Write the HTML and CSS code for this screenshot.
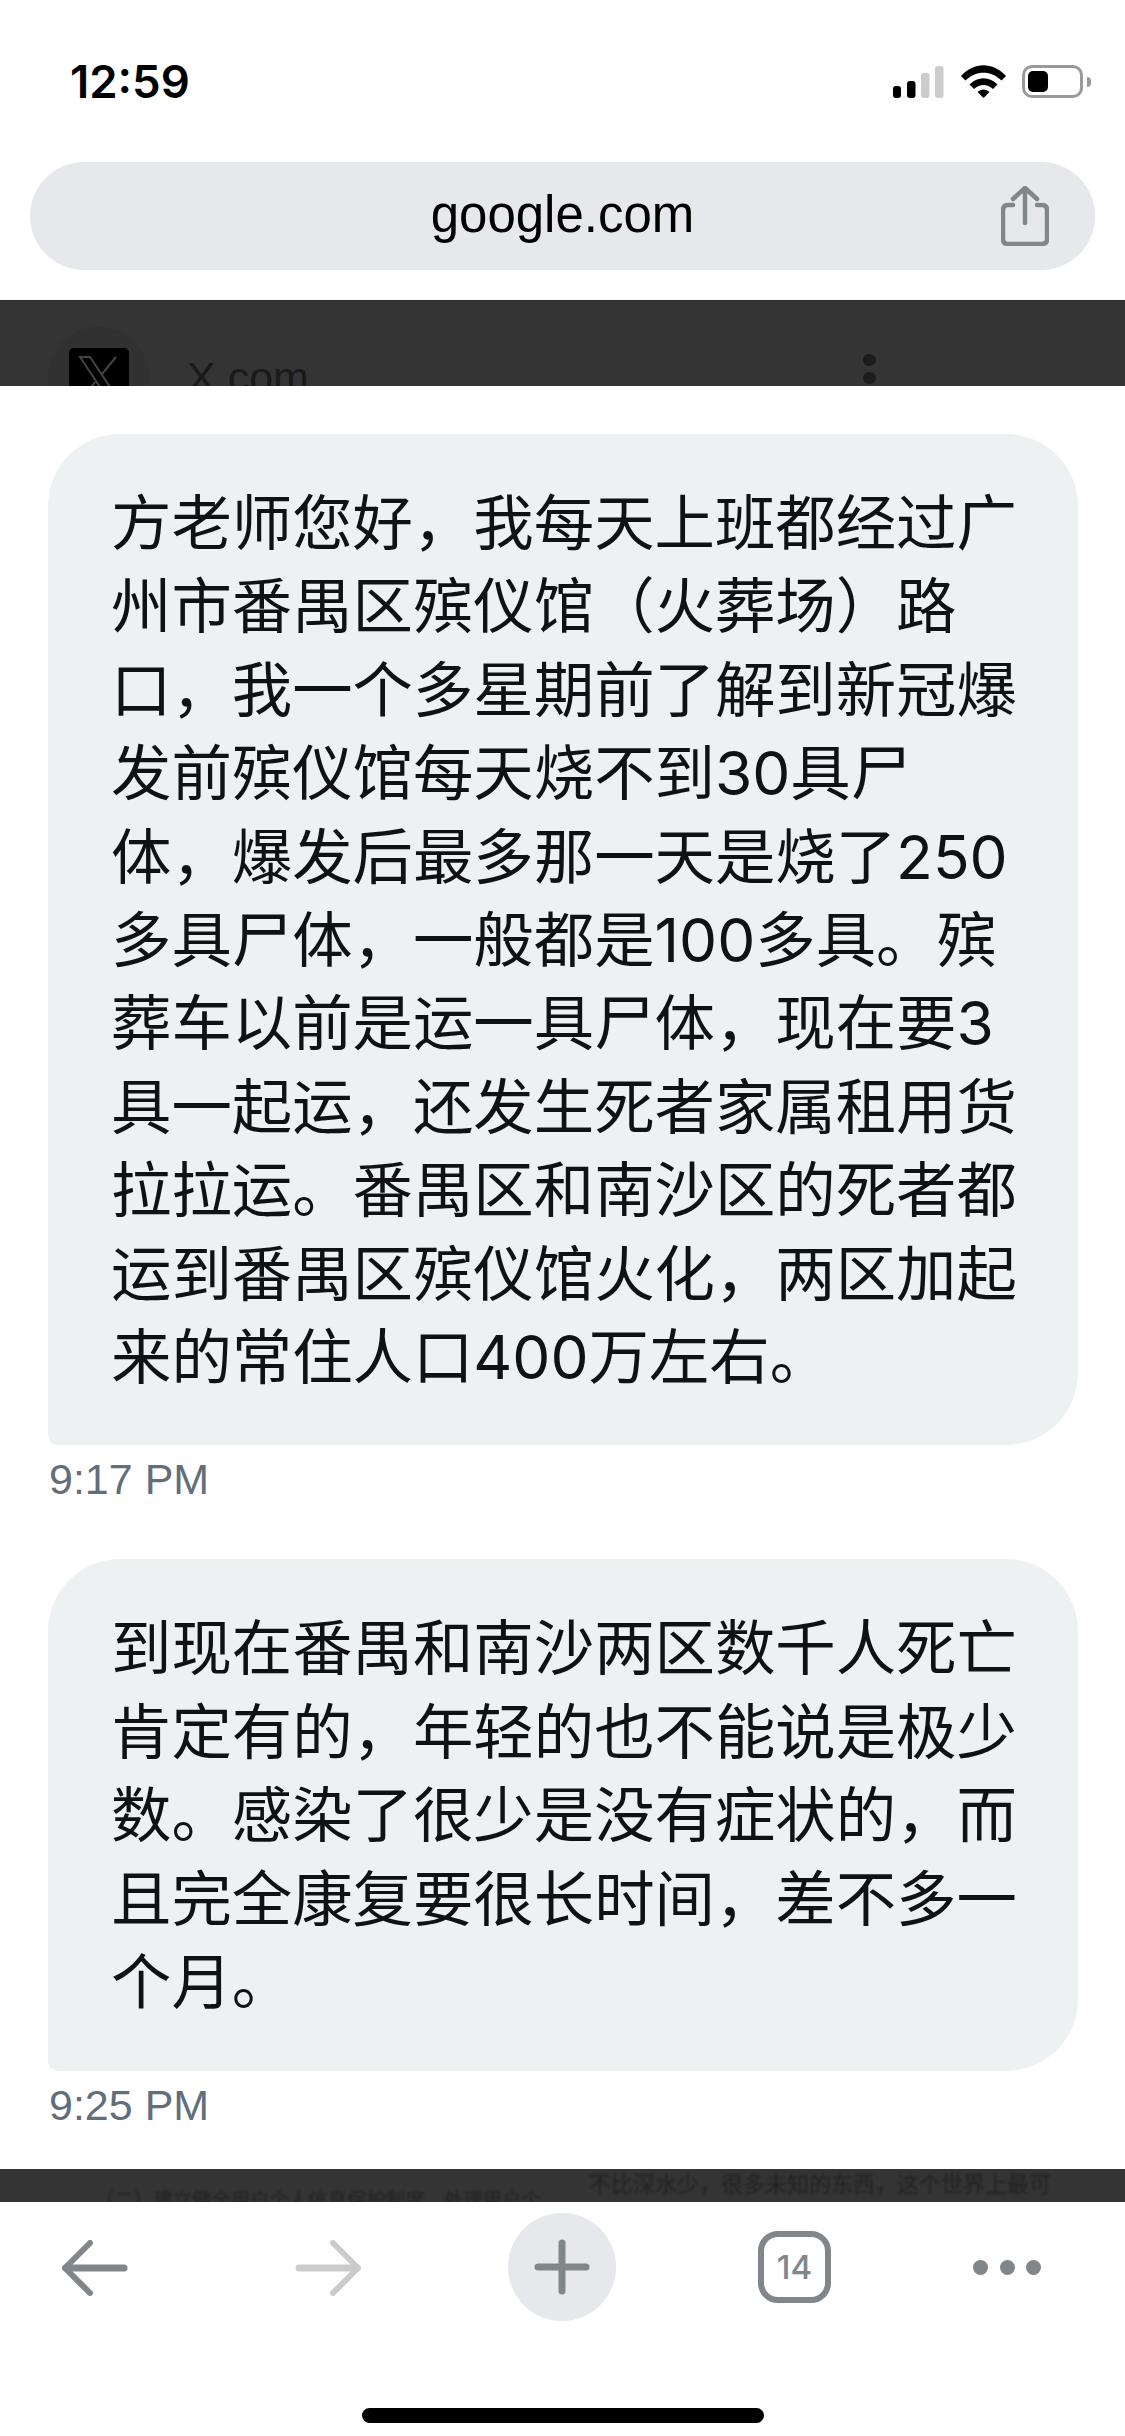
FILE: index.html
```html
<!DOCTYPE html>
<html lang="zh">
<head>
  <meta charset="UTF-8">
  <meta name="viewport" content="width=device-width, initial-scale=1.0">
  <title>google.com</title>
  <link rel="stylesheet" href="styles.css">
</head>
<body>
  <div class="status-bar">
    <span class="clock">12:59</span>
    <div class="status-icons">
      <svg class="signal" width="51" height="33" viewBox="0 0 51 33">
        <rect x="0" y="21" width="8" height="12" rx="3" fill="#000"/>
        <rect x="14" y="16" width="8.5" height="17" rx="3" fill="#000"/>
        <rect x="28" y="8" width="8.5" height="25" rx="3" fill="#ccc"/>
        <rect x="42" y="1" width="8.5" height="32" rx="3" fill="#ccc"/>
      </svg>
      <svg class="wifi" width="45" height="33" viewBox="0 0 45 33">
        <path d="M0 11 C13 -3.500 32 -3.500 45 11 L40.500 15.500 C30 5 15 5 4.500 15.500 Z" fill="#000"/>
        <path d="M8.500 19.500 C17 11 28 11 36.500 19.500 L32 24 C26 18.500 19 18.500 13 24 Z" fill="#000"/>
        <path d="M16.500 27 C20 23.500 25 23.500 28.500 27 L22.500 33 Z" fill="#000"/>
      </svg>
      <div class="battery"><div class="battery-level"></div></div>
      <div class="battery-cap"></div>
    </div>
  </div>

  <div class="url-bar">
    <span class="url-text">google.com</span>
    <svg class="share" width="48" height="60" viewBox="0 0 48 60" fill="none" stroke="#81868b" stroke-width="4.5" stroke-linecap="round" stroke-linejoin="round">
      <path d="M12 19 H7 Q2 19 2 24 V53 Q2 58 7 58 H41 Q46 58 46 53 V24 Q46 19 41 19 H36"/>
      <path d="M24 37 V3 M12 13 L24 2 L36 13"/>
    </svg>
  </div>

  <div class="band-top">
    <div class="avatar">
      <div class="avatar-x">
        <svg width="42" height="46" viewBox="0 0 42 46" fill="none" stroke="#444" stroke-width="2">
          <path d="M2 2 H12 L40 44 H30 Z"/>
          <path d="M38 2 L24 19 M17 27 L4 44"/>
        </svg>
      </div>
    </div>
    <span class="band-title">X.com</span>
    <div class="band-dots"><i></i><i></i></div>
  </div>

  <div class="content">
    <div class="message">
      <div class="bubble">方老师您好，我每天上班都经过广<br>州市番禺区殡仪馆（火葬场）路<br>口，我一个多星期前了解到新冠爆<br>发前殡仪馆每天烧不到30具尸<br>体，爆发后最多那一天是烧了250<br>多具尸体，一般都是100多具。殡<br>葬车以前是运一具尸体，现在要3<br>具一起运，还发生死者家属租用货<br>拉拉运。番禺区和南沙区的死者都<br>运到番禺区殡仪馆火化，两区加起<br>来的常住人口400万左右。</div>
      <div class="time">9:17 PM</div>
    </div>
    <div class="message">
      <div class="bubble">到现在番禺和南沙两区数千人死亡<br>肯定有的，年轻的也不能说是极少<br>数。感染了很少是没有症状的，而<br>且完全康复要很长时间，差不多一<br>个月。</div>
      <div class="time">9:25 PM</div>
    </div>
  </div>

  <div class="band-bottom">
    <span class="doc-left">（二）建立健全用户个人信息保护制度，处理用户个</span>
    <span class="doc-right">不比深水少，很多未知的东西，这个世界上最可</span>
  </div>

  <div class="toolbar">
    <svg class="nav-back" width="66" height="56" viewBox="0 0 66 56" fill="none" stroke="#81868b" stroke-linecap="round" stroke-linejoin="round">
      <path d="M28 3 L3 28 L28 53" stroke-width="6"/>
      <path d="M4 28 H62" stroke-width="7"/>
    </svg>
    <svg class="nav-forward" width="66" height="56" viewBox="0 0 66 56" fill="none" stroke="#cbcbcb" stroke-linecap="round" stroke-linejoin="round">
      <path d="M38 3 L63 28 L38 53" stroke-width="6"/>
      <path d="M4 28 H62" stroke-width="7"/>
    </svg>
    <div class="new-tab">
      <svg width="56" height="56" viewBox="0 0 56 56" fill="none" stroke="#81868b" stroke-linecap="round">
        <path d="M28 4 V52" stroke-width="7"/>
        <path d="M4 28 H52" stroke-width="7"/>
      </svg>
    </div>
    <div class="tabs">14</div>
    <div class="more"><i></i><i></i><i></i></div>
  </div>

  <div class="home-bar"></div>
</body>
</html>
```

FILE: styles.css
```css
html, body {
  margin: 0;
  padding: 0;
}
body {
  width: 1125px;
  height: 2436px;
  overflow: hidden;
  background-color: #fff;
  font-family: "Liberation Sans", "Noto Sans CJK SC", sans-serif;
  color: #000;
}

/* status bar */
.status-bar {
  height: 162px;
  box-sizing: border-box;
  padding: 60px 34px 0 70px;
  display: flex;
  justify-content: space-between;
  align-items: flex-start;
}
.clock {
  font-size: 45.5px;
  font-weight: 600;
  line-height: 44px;
  font-family: Inter, "Liberation Sans", sans-serif;
}
.status-icons {
  display: flex;
  align-items: center;
  padding-top: 5px;
}
.signal {
  margin-right: 17px;
}
.wifi {
  margin-right: 16px;
}
.battery {
  width: 61px;
  height: 33px;
  border: 3px solid #999;
  border-radius: 10px;
  box-sizing: border-box;
  padding: 3px;
}
.battery-level {
  width: 20px;
  height: 100%;
  background-color: #000;
  border-radius: 5px;
}
.battery-cap {
  width: 4px;
  height: 10px;
  margin-left: 4px;
  background-color: #999;
  border-radius: 0 4px 4px 0;
}

/* url bar */
.url-bar {
  height: 108px;
  margin: 0 30px;
  background-color: #e7e8ec;
  border-radius: 54px;
  display: flex;
  align-items: center;
  justify-content: center;
  position: relative;
}
.url-text {
  font-size: 51px;
  line-height: 56px;
  margin-top: -3px;
}
.share {
  position: absolute;
  right: 46px;
  top: 24px;
}

/* page behind the dialog */
.band-top {
  margin-top: 30px;
  height: 86px;
  background-color: #343434;
  overflow: hidden;
  display: flex;
  align-items: flex-start;
  padding: 0 249px 0 48px;
  border-top: 1px solid #2a2a2a;
  box-sizing: border-box;
}
.avatar {
  width: 101px;
  height: 101px;
  margin-top: 26px;
  border-radius: 50%;
  background-color: #313131;
  display: flex;
  justify-content: center;
  padding-top: 21px;
  box-sizing: border-box;
  flex-shrink: 0;
}
.avatar-x {
  width: 60px;
  height: 60px;
  background-color: #000;
  border-radius: 5px;
  display: flex;
  align-items: center;
  justify-content: center;
}
.band-title {
  margin: 53px 0 0 38px;
  font-size: 43px;
  line-height: 46px;
  color: #1a1a1a;
}
.band-dots {
  margin: 53px 0 0 auto;
  display: flex;
  flex-direction: column;
  gap: 6px;
}
.band-dots i {
  width: 13px;
  height: 12px;
  border-radius: 50%;
  background-color: #1c1c1c;
}

/* messages */
.content {
  padding: 48px 47px 0 48px;
  height: 1783px;
  box-sizing: border-box;
}
.message {
  margin-bottom: 58px;
}
.bubble {
  background-color: #eef1f2;
  border-radius: 72px 72px 72px 10px;
  padding: 48px 0 46px 63px;
  font-family: Inter, "Noto Sans CJK SC", sans-serif;
  font-size: 60.4px;
  font-weight: 400;
  line-height: 83.4px;
  white-space: nowrap;
  color: #0f1214;
}
.time {
  margin-top: 12px;
  padding-left: 1px;
  font-size: 43px;
  line-height: 44px;
  color: #626f7b;
}

/* page below the dialog */
.band-bottom {
  height: 33px;
  background-color: #343434;
  overflow: hidden;
  position: relative;
  color: #222;
}
.doc-left {
  position: absolute;
  left: 95px;
  top: 17px;
  font-size: 19.4px;
  line-height: 28px;
  white-space: nowrap;
  filter: blur(1px);
}
.doc-right {
  position: absolute;
  left: 589px;
  top: 1px;
  font-size: 22px;
  line-height: 30px;
  white-space: nowrap;
  filter: blur(1px);
}

/* browser toolbar */
.toolbar {
  height: 120px;
  padding: 11px 0 0 62px;
  display: flex;
  align-items: flex-start;
}
.nav-back {
  margin-top: 27px;
}
.nav-forward {
  margin: 27px 0 0 167px;
}
.new-tab {
  width: 108px;
  height: 108px;
  margin-left: 147px;
  border-radius: 50%;
  background-color: #e7e8ec;
  display: flex;
  align-items: center;
  justify-content: center;
}
.tabs {
  margin: 18px 0 0 142px;
  width: 73px;
  height: 72px;
  box-sizing: border-box;
  border: 6px solid #81868b;
  border-radius: 20px;
  color: #81868b;
  font-family: Inter, "Liberation Sans", sans-serif;
  font-size: 33px;
  font-weight: 500;
  line-height: 60px;
  text-align: center;
}
.more {
  margin: 47px 0 0 142px;
  display: flex;
  gap: 11.5px;
}
.more i {
  width: 15px;
  height: 15px;
  border-radius: 50%;
  background-color: #81868b;
}
.home-bar {
  width: 402px;
  height: 15px;
  margin: 75px auto 0;
  background-color: #000;
  border-radius: 8px;
}
```
